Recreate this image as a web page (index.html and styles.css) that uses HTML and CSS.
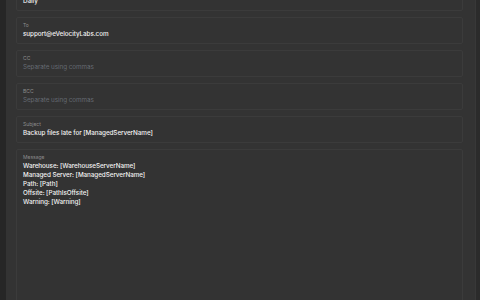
FILE: index.html
```html
<!DOCTYPE html>
<html>
<head>
<meta charset="utf-8">
<link rel="stylesheet" href="styles.css">
</head>
<body>
<div class="page">
  <div class="panel">
    <div class="form">
      <div class="field">
        <div class="label">Frequency</div>
        <div class="value">Daily</div>
      </div>
      <div class="field">
        <div class="label">To</div>
        <div class="value">support@eVelocityLabs.com</div>
      </div>
      <div class="field">
        <div class="label">CC</div>
        <div class="value placeholder">Separate using commas</div>
      </div>
      <div class="field">
        <div class="label">BCC</div>
        <div class="value placeholder">Separate using commas</div>
      </div>
      <div class="field">
        <div class="label">Subject</div>
        <div class="value">Backup files late for [ManagedServerName]</div>
      </div>
      <div class="field message">
        <div class="label">Message</div>
        <div class="value lines">Warehouse: [WarehouseServerName]<br>Managed Server: [ManagedServerName]<br>Path: [Path]<br>Offsite: [PathIsOffsite]<br>Warning: [Warning]</div>
      </div>
    </div>
  </div>
  <div class="rail"></div>
</div>
</body>
</html>
```
FILE: styles.css
```css
html, body {
  margin: 0;
  padding: 0;
  height: 100%;
  overflow: hidden;
  background: #262626;
  font-family: Inter, "Noto Sans", sans-serif;
}
.page {
  display: flex;
  height: 300px;
  padding-left: 6px;
}
.panel {
  flex: 1;
  background: #333333;
  padding: 0 12px 0 10px;
  overflow: hidden;
  border-right: 1px solid #383838;
}
.rail {
  width: 4px;
  background: #2b2b2b;
}
.form {
  margin-top: -16px;
  display: flex;
  flex-direction: column;
  gap: 6px;
}
.field {
  box-sizing: border-box;
  height: 27px;
  border: 1px solid #3b3b3b;
  border-radius: 2px;
  padding: 4px 6px 0 6px;
}
.label {
  font-size: 5px;
  line-height: 7px;
  color: #8c8c8c;
}
.value {
  font-size: 6.3px;
  line-height: 9px;
  font-weight: 500;
  letter-spacing: -0.05px;
  color: #f2f2f2;
  margin-top: 1px;
}
.placeholder {
  font-weight: 400;
  color: #656a72;
}
.message {
  height: 200px;
}
.lines {
  line-height: 9px;
}
```
